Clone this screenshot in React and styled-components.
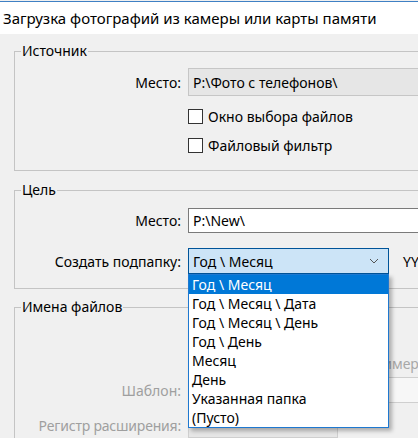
import styled, { createGlobalStyle } from 'styled-components';

const GlobalStyle = createGlobalStyle`
  html, body {
    margin: 0;
    padding: 0;
    background: #f0f0f0;
    overflow: hidden;
  }
  body {
    font-family: "Noto Sans", "Open Sans", sans-serif;
    font-size: 14px;
    color: #000;
  }
`;

const Window = styled.div`
  width: 418px;
  height: 438px;
  overflow: hidden;
  background: #f0f0f0;
`;

const TitleBar = styled.div`
  height: 32px;
  background: #fff;
  border-top: 1px solid #3f80c4;
  margin-top: 1px;
  padding-left: 3px;
  display: flex;
  align-items: center;
  font-size: 15px;
  line-height: 1;
`;

const Content = styled.div`
  padding-top: 8px;
  padding-left: 14px;
`;

const Group = styled.fieldset`
  width: 440px;
  margin: ${(p) => p.top || 0}px 0 0 0;
  padding: 0 0 ${(p) => p.bottom || 0}px 0;
  border: 1px solid #c4c4c4;
  min-width: 0;
`;

const Legend = styled.legend`
  margin-left: 6px;
  padding: 0 1px;
  font-size: 14px;
  line-height: 18px;
`;

const Row = styled.div`
  display: flex;
  align-items: center;
  gap: 7px;
  height: ${(p) => p.h}px;
  margin-top: ${(p) => p.mt || 0}px;
  position: relative;
`;

const Label = styled.div`
  width: 166px;
  flex: none;
  text-align: right;
  white-space: nowrap;
  letter-spacing: ${(p) => (p.tight ? '-0.2px' : 'normal')};
  color: ${(p) => (p.disabled ? '#9f9f9f' : '#000')};
`;

const Field = styled.div`
  width: ${(p) => p.w || 260}px;
  flex: none;
  height: 100%;
  box-sizing: border-box;
  display: flex;
  align-items: center;
  padding-left: 4px;
  background: ${(p) => p.bg || (p.readOnly ? '#e6e6e6' : '#fff')};
  border: 1px solid ${(p) => (p.readOnly ? '#c6c6c6' : p.disabled ? '#cfcfcf' : '#7a7a7a')};
  white-space: nowrap;
`;

const CheckRow = styled.label`
  display: flex;
  align-items: center;
  gap: 5px;
  height: 29px;
  margin-left: 173px;
  margin-top: ${(p) => p.mt || 0}px;
`;

const Box = styled.span`
  width: 15px;
  height: 15px;
  box-sizing: border-box;
  background: #fff;
  border: 1px solid #333;
  flex: none;
`;

const SelectWrap = styled.div`
  position: relative;
  flex: none;
  width: 201px;
  height: 100%;
`;

const Select = styled.div`
  height: 100%;
  box-sizing: border-box;
  display: flex;
  align-items: center;
  justify-content: space-between;
  padding: 0 9px 0 4px;
  background: #cce4f7;
  border: 1px solid #005499;
`;

const Hint = styled.span`
  margin-left: 7px;
  white-space: nowrap;
`;

const Menu = styled.ul`
  position: absolute;
  top: 100%;
  left: 0;
  width: 201px;
  box-sizing: border-box;
  margin: 0;
  padding: 0;
  list-style: none;
  background: #fff;
  border: 1px solid #1e78d0;
  box-shadow: 3px 3px 4px rgba(0, 0, 0, 0.28);
  z-index: 2;
`;

const Item = styled.li`
  height: 19px;
  line-height: 19px;
  padding-left: 3px;
  white-space: nowrap;
  background: ${(p) => (p.active ? '#0078d7' : 'transparent')};
  color: ${(p) => (p.active ? '#fff' : '#000')};
`;

const Sample = styled.div`
  margin-left: 347px;
  color: #a8a8a8;
  white-space: nowrap;
`;

const Chevron = () => (
  <svg width="10" height="6" viewBox="0 0 10 6">
    <path d="M1 1l4 4 4-4" fill="none" stroke="#555" strokeWidth="1" />
  </svg>
);

const options = [
  'Год \\ Месяц',
  'Год \\ Месяц \\ Дата',
  'Год \\ Месяц \\ День',
  'Год \\ День',
  'Месяц',
  'День',
  'Указанная папка',
  '(Пусто)',
];

const App = () => (
  <Window>
    <GlobalStyle />
    <TitleBar>Загрузка фотографий из камеры или карты памяти</TitleBar>
    <Content>
      <Group top={0} bottom={10}>
        <Legend>Источник</Legend>
        <Row h={28} mt={8}>
          <Label>Место:</Label>
          <Field readOnly>P:\Фото с телефонов\</Field>
        </Row>
        <CheckRow mt={6}>
          <Box />
          Окно выбора файлов
        </CheckRow>
        <CheckRow>
          <Box />
          Файловый фильтр
        </CheckRow>
      </Group>

      <Group top={10} bottom={14}>
        <Legend>Цель</Legend>
        <Row h={25} mt={9}>
          <Label>Место:</Label>
          <Field>P:\New\</Field>
        </Row>
        <Row h={26} mt={15}>
          <Label>Создать подпапку:</Label>
          <SelectWrap>
            <Select>
              <span>Год \ Месяц</span>
              <Chevron />
            </Select>
            <Menu>
              {options.map((o, i) => (
                <Item key={o} active={i === 0}>
                  {o}
                </Item>
              ))}
            </Menu>
          </SelectWrap>
          <Hint>YYYY\MM\</Hint>
        </Row>
      </Group>

      <Group top={9} bottom={20}>
        <Legend>Имена файлов</Legend>
        <Row h={20} mt={37}>
          <Sample>(пример)</Sample>
        </Row>
        <Row h={26} mt={4}>
          <Label disabled>Шаблон:</Label>
          <Field disabled w={240} bg="#f7f7f7" />
        </Row>
        <Row h={25} mt={10}>
          <Label disabled tight>Регистр расширения:</Label>
          <Field disabled w={150} bg="#e6e6e6" />
        </Row>
      </Group>
    </Content>
  </Window>
);

export default App;
